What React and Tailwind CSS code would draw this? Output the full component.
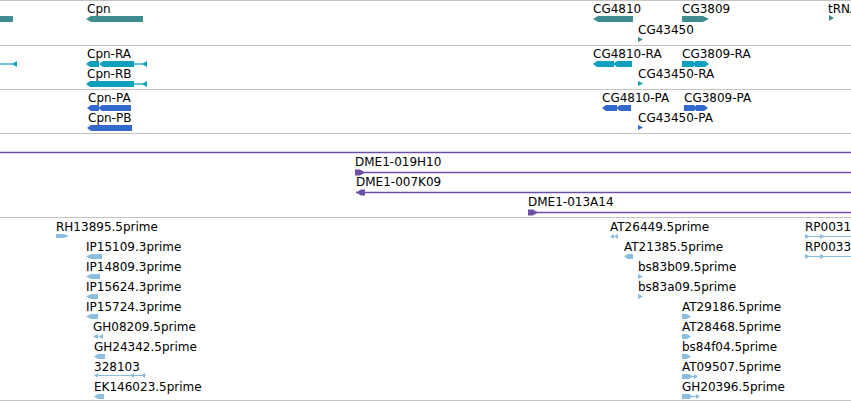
import React from 'react';

const TEAL = '#3f8e8f';
const CYAN = '#0ea0bd';
const BLUE = '#3368cd';
const PURPLE = '#6e4fa6';
const EST = '#8abde0';

// exon block with an optional pointed end
function Block({ x1, x2, y, h = 6, dir, tip = 4, color }) {
  const m = y + h / 2;
  let pts;
  if (dir === 'L') pts = `${x1},${m} ${x1 + tip},${y} ${x2},${y} ${x2},${y + h} ${x1 + tip},${y + h}`;
  else if (dir === 'R') pts = `${x1},${y} ${x2 - tip},${y} ${x2},${m} ${x2 - tip},${y + h} ${x1},${y + h}`;
  else pts = `${x1},${y} ${x2},${y} ${x2},${y + h} ${x1},${y + h}`;
  return <polygon points={pts} fill={color} />;
}

function Tri({ x, y, w = 5, h = 6, dir = 'R', color }) {
  const pts = dir === 'R'
    ? `${x},${y} ${x + w},${y + h / 2} ${x},${y + h}`
    : `${x + w},${y} ${x},${y + h / 2} ${x + w},${y + h}`;
  return <polygon points={pts} fill={color} />;
}

function Line({ x1, x2, y, color, w = 1.2 }) {
  return <line x1={x1} x2={x2} y1={y} y2={y} stroke={color} strokeWidth={w} />;
}

// height is border-box: top border (and bottom one for the last track) included
function Track({ top, height, labels, children, last }) {
  const off = top + 1;
  const inner = height - (last ? 2 : 1);
  return (
    <div
      className={`relative border-t border-[#c3c3c3] ${last ? 'border-b' : ''}`}
      style={{ height }}
    >
      <svg
        className="absolute left-0 top-0 overflow-visible"
        width="851"
        height={inner}
        viewBox={`0 ${off} 851 ${inner}`}
      >
        {children}
      </svg>
      {labels.map(([text, x, y]) => (
        <span
          key={text}
          className="absolute whitespace-nowrap text-[12px] leading-[14px] text-black"
          style={{ left: x, top: y - off }}
        >
          {text}
        </span>
      ))}
    </div>
  );
}

export default function App() {
  return (
    <div className="w-[851px] h-[401px] overflow-hidden bg-white font-['DejaVu_Sans',sans-serif]">
      {/* genes */}
      <Track
        top={0}
        height={45}
        labels={[
          ['Cpn', 87, 2],
          ['CG4810', 593, 2],
          ['CG3809', 682, 2],
          ['CG43450', 638, 23],
          ['tRNA:CR31942', 828, 2],
        ]}
      >
        <Block x1={0} x2={13} y={16} color={TEAL} />
        <Block x1={86} x2={143} y={16} dir="L" tip={5} color={TEAL} />
        <Block x1={593} x2={633} y={16} dir="L" tip={5} color={TEAL} />
        <Block x1={682} x2={709} y={16} dir="R" tip={6} color={TEAL} />
        <Tri x={638} y={37} w={5} h={5} color={TEAL} />
        <Tri x={829} y={15} w={5} h={6} color={TEAL} />
      </Track>

      {/* transcripts */}
      <Track
        top={45}
        height={44}
        labels={[
          ['Cpn-RA', 87, 47],
          ['Cpn-RB', 87, 67],
          ['CG4810-RA', 593, 47],
          ['CG3809-RA', 682, 47],
          ['CG43450-RA', 638, 67],
        ]}
      >
        <Line x1={0} x2={15} y={64} color={CYAN} />
        <Tri x={12} y={61} w={5} h={6} dir="L" color={CYAN} />

        <Block x1={86} x2={99} y={61} dir="L" color={CYAN} />
        <Block x1={99} x2={134} y={61} dir="L" color={CYAN} />
        <Line x1={134} x2={145} y={64} color={CYAN} />
        <Tri x={142} y={61} w={5} h={6} dir="L" color={CYAN} />

        <Block x1={86} x2={134} y={81} dir="L" color={CYAN} />
        <Line x1={134} x2={145} y={84} color={CYAN} />
        <Tri x={142} y={81} w={5} h={6} dir="L" color={CYAN} />

        <Block x1={593} x2={614} y={61} dir="L" color={CYAN} />
        <Block x1={613} x2={632} y={61} dir="L" color={CYAN} />
        <Block x1={682} x2={697} y={61} dir="R" color={CYAN} />
        <Block x1={695} x2={709} y={61} dir="R" color={CYAN} />
        <Tri x={638} y={81} w={5} h={5} color={CYAN} />
      </Track>

      {/* proteins */}
      <Track
        top={89}
        height={44}
        labels={[
          ['Cpn-PA', 88, 91],
          ['Cpn-PB', 88, 111],
          ['CG4810-PA', 602, 91],
          ['CG3809-PA', 684, 91],
          ['CG43450-PA', 638, 111],
        ]}
      >
        <Block x1={87} x2={99} y={105} dir="L" color={BLUE} />
        <Block x1={98} x2={131} y={105} dir="L" color={BLUE} />
        <Block x1={87} x2={132} y={125} dir="L" color={BLUE} />
        <Block x1={602} x2={617} y={105} dir="L" color={BLUE} />
        <Block x1={616} x2={631} y={105} dir="L" color={BLUE} />
        <Block x1={684} x2={698} y={105} dir="R" color={BLUE} />
        <Block x1={696} x2={708} y={105} dir="R" color={BLUE} />
        <Tri x={638} y={125} w={5} h={5} color={BLUE} />
      </Track>

      {/* BAC clones */}
      <Track
        top={133}
        height={84}
        labels={[
          ['DME1-019H10', 355, 155],
          ['DME1-007K09', 356, 175],
          ['DME1-013A14', 528, 195],
        ]}
      >
        <Line x1={0} x2={851} y={152.5} color={PURPLE} w={1.4} />
        <Line x1={355} x2={851} y={172.5} color={PURPLE} w={1.4} />
        <Block x1={355} x2={365} y={169.5} h={6} dir="R" tip={5} color={PURPLE} />
        <Line x1={356} x2={851} y={192.5} color={PURPLE} w={1.4} />
        <Block x1={356} x2={365} y={189.5} h={6} dir="L" tip={5} color={PURPLE} />
        <Line x1={528} x2={851} y={212.5} color={PURPLE} w={1.4} />
        <Block x1={528} x2={538} y={209.5} h={6} dir="R" tip={5} color={PURPLE} />
      </Track>

      {/* ESTs */}
      <Track
        top={217}
        height={184}
        last
        labels={[
          ['RH13895.5prime', 56, 220],
          ['IP15109.3prime', 86, 240],
          ['IP14809.3prime', 86, 260],
          ['IP15624.3prime', 86, 280],
          ['IP15724.3prime', 86, 300],
          ['GH08209.5prime', 93, 320],
          ['GH24342.5prime', 94, 340],
          ['328103', 94, 360],
          ['EK146023.5prime', 94, 380],
          ['AT26449.5prime', 610, 220],
          ['AT21385.5prime', 624, 240],
          ['bs83b09.5prime', 638, 260],
          ['bs83a09.5prime', 638, 280],
          ['AT29186.5prime', 682, 300],
          ['AT28468.5prime', 682, 320],
          ['bs84f04.5prime', 682, 340],
          ['AT09507.5prime', 682, 360],
          ['GH20396.5prime', 682, 380],
          ['RP00312.5prime', 805, 220],
          ['RP00331.5prime', 805, 240],
        ]}
      >
        <Block x1={56} x2={69} y={234} h={4} dir="R" tip={5} color={EST} />
        <Block x1={86} x2={102} y={254} h={5} dir="L" tip={5} color={EST} />
        <Block x1={86} x2={100} y={274} h={5} dir="L" tip={5} color={EST} />
        <Block x1={86} x2={98} y={294} h={5} dir="L" tip={5} color={EST} />
        <Block x1={86} x2={98} y={314} h={5} dir="L" tip={5} color={EST} />
        <Tri x={93} y={334} w={5} h={5} dir="L" color={EST} />
        <Tri x={98} y={334} w={5} h={5} dir="L" color={EST} />
        <Block x1={94} x2={105} y={354} h={5} dir="L" tip={4} color={EST} />
        <Line x1={94} x2={146} y={375.5} color={EST} />
        <Tri x={94} y={373} w={4} h={5} dir="L" color={EST} />
        <Tri x={130} y={373} w={4} h={5} dir="L" color={EST} />
        <Tri x={141} y={373} w={4} h={5} dir="L" color={EST} />
        <Block x1={94} x2={104} y={394} h={5} dir="L" tip={4} color={EST} />

        <Tri x={610} y={234} w={4} h={5} dir="L" color={EST} />
        <Tri x={614} y={234} w={4} h={5} dir="L" color={EST} />
        <Block x1={624} x2={633} y={254} h={5} dir="L" tip={4} color={EST} />
        <Tri x={638} y={274} w={5} h={5} color={EST} />
        <Tri x={638} y={294} w={5} h={5} color={EST} />
        <Block x1={682} x2={691} y={314} h={5} dir="R" tip={4} color={EST} />
        <Block x1={682} x2={691} y={334} h={5} dir="R" tip={4} color={EST} />
        <Block x1={682} x2={691} y={354} h={5} dir="R" tip={4} color={EST} />
        <Block x1={682} x2={693} y={374} h={5} dir="R" tip={4} color={EST} />
        <Line x1={692} x2={697} y={376.5} color={EST} />
        <Tri x={694} y={374} w={4} h={5} color={EST} />
        <Block x1={682} x2={693} y={394} h={5} dir="R" tip={4} color={EST} />
        <Line x1={692} x2={699} y={396.5} color={EST} />
        <Tri x={696} y={394} w={4} h={5} color={EST} />

        <Line x1={805} x2={851} y={236.5} color={EST} />
        <Tri x={805} y={234} w={5} h={5} color={EST} />
        <Tri x={820} y={234} w={5} h={5} color={EST} />
        <Line x1={805} x2={851} y={256.5} color={EST} />
        <Tri x={805} y={254} w={5} h={5} color={EST} />
        <Tri x={820} y={254} w={5} h={5} color={EST} />
      </Track>
    </div>
  );
}
